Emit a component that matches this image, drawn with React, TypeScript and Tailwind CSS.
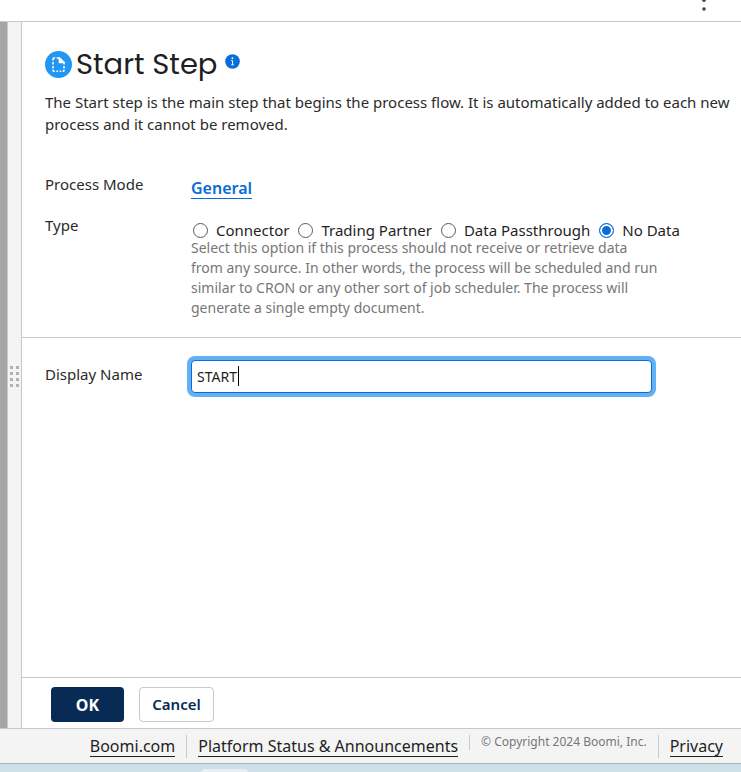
import React, { useState } from "react";
import { clsx } from "clsx";

const stepTypes = ["Connector", "Trading Partner", "Data Passthrough", "No Data"];

// ── Icons ────────────────────────────────────────────────────
function StartIcon() {
  return (
    <svg width="27" height="27" viewBox="0 0 27 27" aria-hidden="true" className="shrink-0">
      <circle cx="13.5" cy="13.5" r="13.5" fill="#2196f3" />
      <g fill="none" stroke="#fff" strokeWidth="1.5">
        <path d="M8 9.4V7.8a.8.8 0 0 1 .8-.8h1.4M11.6 7H14" />
        <path d="M8 11v2.4M8 15v2.4M8 18.8v.6a.8.8 0 0 0 .8.8h1M11.4 20.2h1.6M14.6 20.2h1.6M17.6 20.2h.6a.8.8 0 0 0 .8-.8v-.6M19 17.4V15M19 13.4V11" />
      </g>
      <path d="M13.6 6.3h1.3l4.8 4.8v1.2h-5.3a.8.8 0 0 1-.8-.8z" fill="#fff" />
    </svg>
  );
}

function InfoIcon() {
  return (
    <svg width="15" height="15" viewBox="0 0 15 15" aria-hidden="true">
      <circle cx="7.5" cy="7.5" r="7.3" fill="#0a6cd6" />
      <circle cx="7.4" cy="4.2" r="0.9" fill="#fff" />
      <path d="M6.2 6.6h1.4v4M6.2 10.8h2.7" fill="none" stroke="#fff" strokeWidth="1" />
    </svg>
  );
}

function GripIcon() {
  return (
    <svg width="10" height="22" viewBox="0 0 10 22" aria-hidden="true" fill="#b3b3b3">
      {[0, 6, 12, 18].map((y) => (
        <React.Fragment key={y}>
          <rect x="0" y={y} width="3" height="3" />
          <rect x="6" y={y} width="3" height="3" />
        </React.Fragment>
      ))}
    </svg>
  );
}

// ── Footer ───────────────────────────────────────────────────
function FooterLink({ children }: { children: React.ReactNode }) {
  return (
    <a href="#" className="mt-[7px] h-[21px] border-b border-[#1f1f1f] text-base leading-5 whitespace-nowrap text-[#1f1f1f]">
      {children}
    </a>
  );
}

function Separator({ short }: { short?: boolean }) {
  return <span className={clsx("mx-[11px] mt-1.5 w-px bg-[#c8c8c8]", short ? "h-[15px]" : "h-[23px]")} />;
}

export default function App() {
  const [type, setType] = useState("No Data");
  const [name, setName] = useState("START");

  return (
    <div className="flex min-h-screen flex-col bg-white font-['Noto_Sans',sans-serif] text-[15px] text-[#2b2b2b]">
      <header className="flex h-[22px] shrink-0 justify-end border-b border-[#c8c8c8] pr-[35px]">
        <button type="button" aria-label="More options" className="h-3">
          <svg width="4" height="12" viewBox="0 0 4 12" fill="#444" className="block">
            <circle cx="2" cy="0.2" r="1.8" />
            <circle cx="2" cy="9" r="1.8" />
          </svg>
        </button>
      </header>

      <div className="flex flex-1">
        <div className="w-[7px] shrink-0 bg-[#a5a5a5]" />
        <div className="flex w-[15px] shrink-0 items-center justify-center border-x border-[#c8c8c8] bg-[#f4f4f4] pt-1">
          <GripIcon />
        </div>

        <main className="flex min-w-0 flex-1 flex-col">
          <section className="border-b border-[#c8c8c8] pt-6 pr-1 pb-[19px] pl-[23px]">
            <div className="flex h-9 items-center gap-1">
              <StartIcon />
              <h1 className="font-['Poppins','Inter',sans-serif] text-[29px] leading-9 text-[#1f1f1f]">Start Step</h1>
              <button type="button" aria-label="Help" className="mb-1.5 ml-1">
                <InfoIcon />
              </button>
            </div>
            <p className="mt-[9px] leading-[22px]">
              The Start step is the main step that begins the process flow. It is automatically added to each new process and it cannot be removed.
            </p>

            <div className="mt-[39px] flex">
              <span className="w-[146px] shrink-0 leading-5">Process Mode</span>
              <a href="#" className="mt-1 border-b border-[#0a6cd6] text-base leading-5 font-semibold text-[#0a6cd6]">General</a>
            </div>

            <div className="mt-4 flex">
              <span id="type-label" className="w-[146px] shrink-0 leading-5">Type</span>
              <div className="min-w-0 flex-1">
                <div role="radiogroup" aria-labelledby="type-label" className="mt-[7px] flex flex-wrap gap-x-[9px] pl-0.5">
                  {stepTypes.map((t) => (
                    <label key={t} className="flex items-center gap-2 leading-4 whitespace-nowrap text-[#1f1f1f]">
                      <input
                        type="radio"
                        name="type"
                        checked={type === t}
                        onChange={() => setType(t)}
                        className="size-[15px] appearance-none rounded-full border border-[#5a5a5a] bg-white checked:border-[#0a6cd6] checked:bg-[#0a6cd6] checked:shadow-[inset_0_0_0_2px_#fff]"
                      />
                      {t}
                    </label>
                  ))}
                </div>
                <p className="max-w-[468px] text-sm leading-5 text-[#777]">
                  Select this option if this process should not receive or retrieve data from any source. In other words, the process will be scheduled and run similar to CRON or any other sort of job scheduler. The process will generate a single empty document.
                </p>
              </div>
            </div>
          </section>

          <section className="flex flex-1 items-start px-[23px] pt-[22px]">
            <label htmlFor="display-name" className="mt-1 w-[146px] shrink-0 leading-5">Display Name</label>
            <div className="relative max-w-[461px] flex-1">
              <input
                id="display-name"
                type="text"
                value={name}
                onChange={(e) => setName(e.target.value)}
                className="h-[33px] w-full rounded border border-[#0a6cd6] bg-white px-[5px] text-sm text-[#1f1f1f] ring-4 ring-[#62b1f4] outline-none"
              />
              {/* text cursor */}
              <span className="absolute top-1.5 left-[47px] h-5 w-px bg-black" />
            </div>
          </section>

          <div className="flex gap-[15px] border-t border-[#c8c8c8] px-[29px] pt-[9px] pb-[6px]">
            <button type="button" className="h-[35px] w-[73px] rounded bg-[#072b55] text-base font-bold text-white">OK</button>
            <button type="button" className="h-[35px] w-[75px] rounded border border-[#c8c8c8] bg-white text-[15px] font-semibold text-[#072b55]">Cancel</button>
          </div>
        </main>
      </div>

      <footer className="flex h-9 shrink-0 justify-end border-t border-b border-t-[#c8c8c8] border-b-[#a9b4b8] bg-[#f4f4f4] pr-[18px]">
        <FooterLink>Boomi.com</FooterLink>
        <Separator />
        <FooterLink>Platform Status &amp; Announcements</FooterLink>
        <Separator short />
        <span className="mt-1 text-xs leading-[18px] whitespace-nowrap text-[#777]">© Copyright 2024 Boomi, Inc.</span>
        <Separator />
        <FooterLink>Privacy</FooterLink>
      </footer>
      <div className="h-2 shrink-0 overflow-hidden bg-[#cfdfe7] pt-[5px] pl-[201px]">
        <div className="h-2 w-[47px] rounded-t bg-[#e6f0f4]" />
      </div>
    </div>
  );
}
